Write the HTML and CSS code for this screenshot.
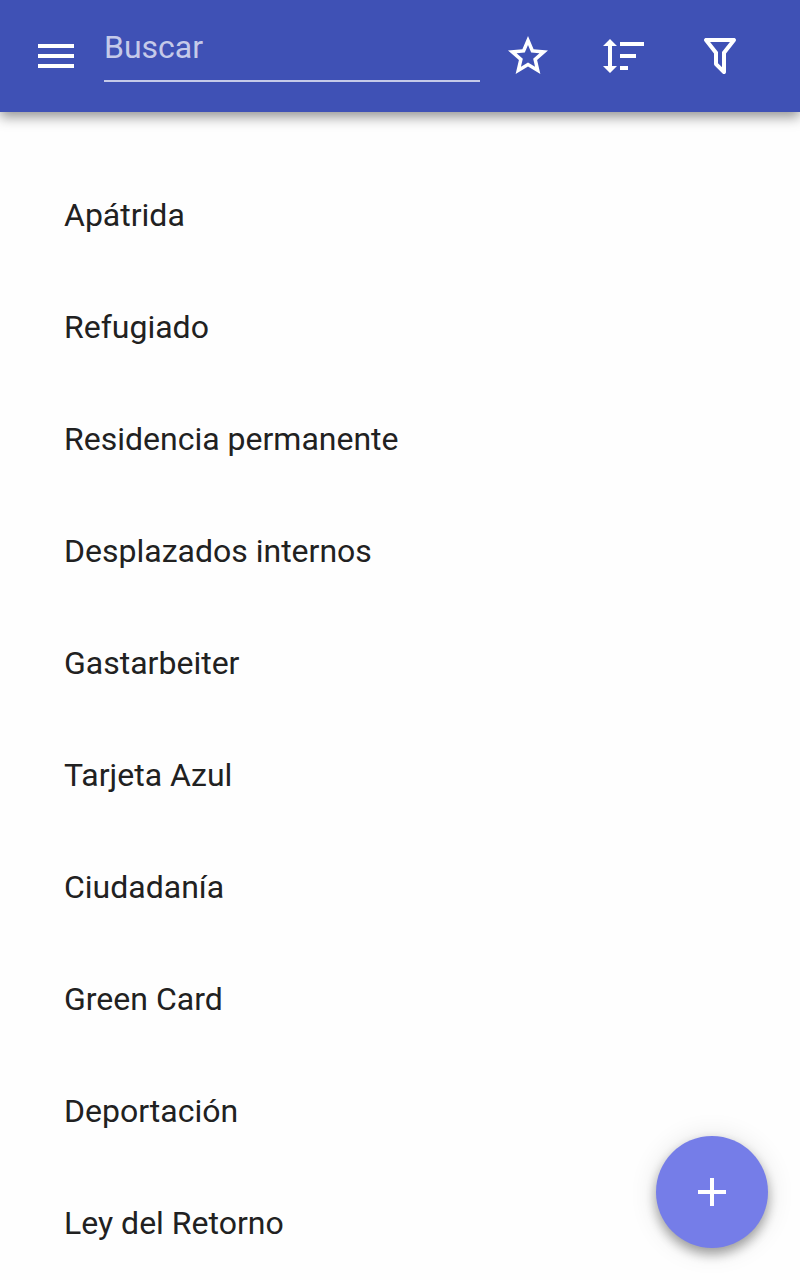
FILE: index.html
```html
<!DOCTYPE html>
<html lang="es">
<head>
  <meta charset="UTF-8">
  <meta name="viewport" content="width=device-width, initial-scale=1.0">
  <title>Buscar</title>
  <link rel="stylesheet" href="styles.css">
</head>
<body>

  <header class="toolbar">
    <button class="icon-btn" aria-label="Menú">
      <svg viewBox="0 0 24 24"><path d="M3 18h18v-2H3v2zm0-5h18v-2H3v2zm0-7v2h18V6H3z"/></svg>
    </button>
    <input class="search" type="text" placeholder="Buscar">
    <nav class="actions">
      <button class="icon-btn" aria-label="Favoritos">
        <svg viewBox="0 0 24 24"><path fill-rule="evenodd" d="M22 9.24l-7.19-.62L12 2 9.19 8.63 2 9.24l5.46 4.73L5.82 21 12 17.27 18.18 21l-1.63-7.03L22 9.24zM12 15.23l-3.53 2.13.94-4.02-3.12-2.7 4.11-.35L12 6.5l1.6 3.79 4.11.35-3.12 2.7.94 4.02L12 15.23z"/></svg>
      </button>
      <button class="icon-btn" aria-label="Ordenar">
        <svg viewBox="0 0 24 24"><path d="M10 13V11H18V13H10M10 19V17H14V19H10M10 7V5H22V7H10M6 17H8.5L5 20.5L1.5 17H4V7H1.5L5 3.5L8.5 7H6V17Z"/></svg>
      </button>
      <button class="icon-btn" aria-label="Filtrar">
        <svg viewBox="0 0 24 24"><path d="M15 19.88C15.04 20.18 14.94 20.5 14.71 20.71C14.32 21.1 13.69 21.1 13.3 20.71L9.29 16.7C9.06 16.47 8.96 16.16 9 15.87V10.75L4.21 4.62C3.87 4.19 3.95 3.56 4.38 3.22C4.57 3.08 4.78 3 5 3H19C19.22 3 19.43 3.08 19.62 3.22C20.05 3.56 20.13 4.19 19.79 4.62L15 10.75V19.88M7.04 5L11 10.06V15.58L13 17.58V10.05L16.96 5H7.04Z"/></svg>
      </button>
    </nav>
  </header>

  <ul class="list">
    <li>Apátrida</li>
    <li>Refugiado</li>
    <li>Residencia permanente</li>
    <li>Desplazados internos</li>
    <li>Gastarbeiter</li>
    <li>Tarjeta Azul</li>
    <li>Ciudadanía</li>
    <li>Green Card</li>
    <li>Deportación</li>
    <li>Ley del Retorno</li>
  </ul>

  <button class="fab" aria-label="Añadir">
    <svg viewBox="0 0 24 24"><path d="M19 13h-6v6h-2v-6H5v-2h6V5h2v6h6v2z"/></svg>
  </button>

</body>
</html>
```
FILE: styles.css
```css
* {
  box-sizing: border-box;
}

body {
  margin: 0;
  font-family: Roboto, sans-serif;
  font-size: 32px;
  color: #212121;
  background-color: #fefefe;
}

button {
  padding: 0;
  border: none;
  background: none;
  cursor: pointer;
}

svg {
  display: block;
  width: 48px;
  height: 48px;
  fill: #fff;
}

.toolbar {
  position: sticky;
  top: 0;
  display: flex;
  align-items: center;
  height: 112px;
  padding: 0 56px 0 32px;
  background-color: #3f51b5;
  box-shadow: 0 5px 12px rgba(0, 0, 0, 0.42);
}

.search {
  width: 376px;
  height: 68px;
  margin: 0 24px;
  align-self: flex-start;
  margin-top: 14px;
  padding: 0 0 1px;
  border: none;
  border-bottom: 2px solid #c5cae9;
  outline: none;
  background: none;
  color: #fff;
  font: inherit;
}

.search::placeholder {
  color: #c5cae9;
  opacity: 1;
}

.actions {
  display: flex;
  gap: 48px;
}

.list {
  margin: 0;
  padding: 48px 0 0;
  list-style: none;
}

.list li {
  display: flex;
  align-items: center;
  height: 112px;
  padding: 0 64px 2px;
}

.fab {
  position: fixed;
  right: 32px;
  bottom: 32px;
  display: flex;
  align-items: center;
  justify-content: center;
  width: 112px;
  height: 112px;
  border-radius: 50%;
  background-color: #757de8;
  box-shadow: 0 6px 12px rgba(0, 0, 0, 0.35), 0 2px 28px rgba(0, 0, 0, 0.12);
}
```
